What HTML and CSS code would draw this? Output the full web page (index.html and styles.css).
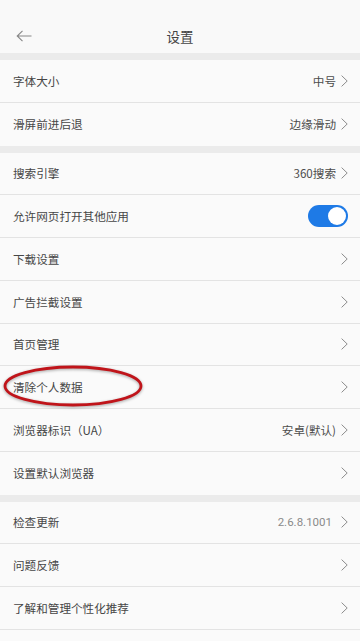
FILE: index.html
```html
<!DOCTYPE html>
<html lang="zh">
<head>
<meta charset="utf-8">
<meta name="viewport" content="width=360">
<title>设置</title>
<link rel="stylesheet" href="styles.css">
</head>
<body>
<div class="page">
  <header class="topbar">
    <svg class="back" width="16" height="12" viewBox="0 0 16 12"><path d="M15.5 6H1.2M6.5 0.8L1.2 6L6.5 11.2" fill="none" stroke="#888" stroke-width="1.1"/></svg>
    <div class="title">设置</div>
  </header>

  <section class="group">
    <div class="row"><span class="label">字体大小</span><span class="value">中号</span><svg class="chev" width="7" height="12" viewBox="0 0 7 12"><path d="M0.6 0.6L6.2 6L0.6 11.4" fill="none" stroke="#8c8c8c" stroke-width="1"/></svg></div>
    <div class="row"><span class="label">滑屏前进后退</span><span class="value">边缘滑动</span><svg class="chev" width="7" height="12" viewBox="0 0 7 12"><path d="M0.6 0.6L6.2 6L0.6 11.4" fill="none" stroke="#8c8c8c" stroke-width="1"/></svg></div>
  </section>

  <section class="group">
    <div class="row"><span class="label">搜索引擎</span><span class="value">360搜索</span><svg class="chev" width="7" height="12" viewBox="0 0 7 12"><path d="M0.6 0.6L6.2 6L0.6 11.4" fill="none" stroke="#8c8c8c" stroke-width="1"/></svg></div>
    <div class="row"><span class="label">允许网页打开其他应用</span><span class="toggle"><span class="knob"></span></span></div>
    <div class="row"><span class="label">下载设置</span><svg class="chev" width="7" height="12" viewBox="0 0 7 12"><path d="M0.6 0.6L6.2 6L0.6 11.4" fill="none" stroke="#8c8c8c" stroke-width="1"/></svg></div>
    <div class="row"><span class="label">广告拦截设置</span><svg class="chev" width="7" height="12" viewBox="0 0 7 12"><path d="M0.6 0.6L6.2 6L0.6 11.4" fill="none" stroke="#8c8c8c" stroke-width="1"/></svg></div>
    <div class="row"><span class="label">首页管理</span><svg class="chev" width="7" height="12" viewBox="0 0 7 12"><path d="M0.6 0.6L6.2 6L0.6 11.4" fill="none" stroke="#8c8c8c" stroke-width="1"/></svg></div>
    <div class="row"><span class="label">清除个人数据</span><svg class="chev" width="7" height="12" viewBox="0 0 7 12"><path d="M0.6 0.6L6.2 6L0.6 11.4" fill="none" stroke="#8c8c8c" stroke-width="1"/></svg>
      <svg class="circle" width="144" height="46" viewBox="0 0 144 46"><ellipse cx="72" cy="23" rx="68" ry="19" fill="none" stroke="#c0141a" stroke-width="2.8"/></svg>
    </div>
    <div class="row"><span class="label">浏览器标识（UA）</span><span class="value">安卓(默认)</span><svg class="chev" width="7" height="12" viewBox="0 0 7 12"><path d="M0.6 0.6L6.2 6L0.6 11.4" fill="none" stroke="#8c8c8c" stroke-width="1"/></svg></div>
    <div class="row"><span class="label">设置默认浏览器</span><svg class="chev" width="7" height="12" viewBox="0 0 7 12"><path d="M0.6 0.6L6.2 6L0.6 11.4" fill="none" stroke="#8c8c8c" stroke-width="1"/></svg></div>
  </section>

  <section class="group">
    <div class="row"><span class="label">检查更新</span><span class="value ver">2.6.8.1001</span><svg class="chev" width="7" height="12" viewBox="0 0 7 12"><path d="M0.6 0.6L6.2 6L0.6 11.4" fill="none" stroke="#8c8c8c" stroke-width="1"/></svg></div>
    <div class="row"><span class="label">问题反馈</span><svg class="chev" width="7" height="12" viewBox="0 0 7 12"><path d="M0.6 0.6L6.2 6L0.6 11.4" fill="none" stroke="#8c8c8c" stroke-width="1"/></svg></div>
    <div class="row"><span class="label">了解和管理个性化推荐</span><svg class="chev" width="7" height="12" viewBox="0 0 7 12"><path d="M0.6 0.6L6.2 6L0.6 11.4" fill="none" stroke="#8c8c8c" stroke-width="1"/></svg></div>
    <div class="row"></div>
  </section>
</div>
</body>
</html>
```
FILE: styles.css
```css
html, body {
  margin: 0;
  padding: 0;
}
body {
  background: #ebebeb;
  font-family: "Noto Sans CJK SC", "Noto Sans", Roboto, sans-serif;
  color: #444;
  width: 360px;
  height: 641px;
  overflow: hidden;
}
.page {
  display: flex;
  flex-direction: column;
}
.topbar {
  height: 53px;
  background: #f9f9f9;
  position: relative;
  display: flex;
  align-items: center;
  justify-content: center;
  padding-top: 18px;
  box-sizing: border-box;
}
.back {
  position: absolute;
  left: 16px;
  top: 30px;
}
.title {
  font-size: 13.5px;
  color: #444;
}
.group {
  margin-top: 7px;
  background: #fafafa;
}
.row {
  height: 42.75px;
  box-sizing: border-box;
  display: flex;
  align-items: center;
  padding: 0 12px 0 13px;
  border-bottom: 1px solid #e3e3e3;
  font-size: 11.6px;
  position: relative;
}
.row:last-child {
  border-bottom: none;
}
.label {
  flex: 1;
  color: #464646;
}
.value {
  color: #4c4c4c;
  margin-right: 5px;
}
.value.ver {
  font-family: Roboto, "Noto Sans", sans-serif;
  color: #8a8a8a;
  font-size: 11.5px;
  margin-right: 9px;
}
.chev {
  display: block;
}
.toggle {
  width: 40px;
  height: 22px;
  border-radius: 11px;
  background: #1e7ae6;
  display: flex;
  align-items: center;
  justify-content: flex-end;
  padding: 2px;
  box-sizing: border-box;
}
.knob {
  width: 18px;
  height: 18px;
  border-radius: 50%;
  background: #ffffff;
}
.circle {
  position: absolute;
  left: 1px;
  top: -3px;
  filter: drop-shadow(0 1px 1.5px rgba(0,0,0,0.35));
}
```
